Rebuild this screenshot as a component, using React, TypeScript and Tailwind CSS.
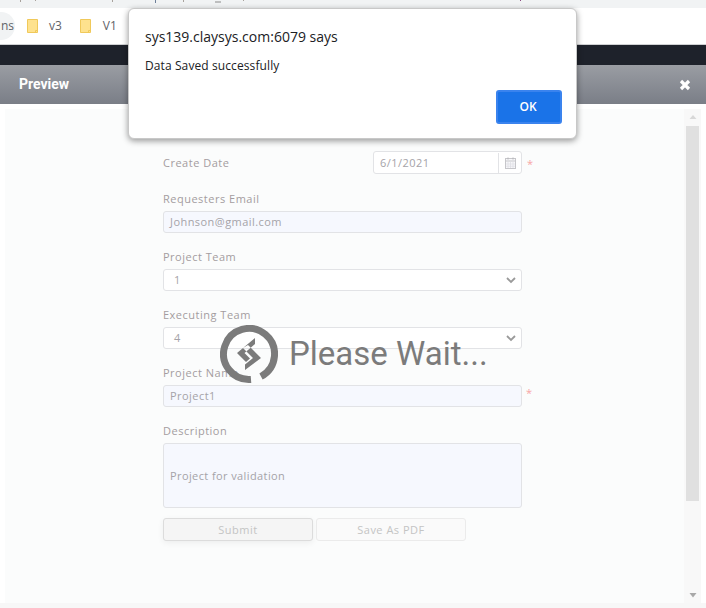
const bodyFont = "font-['Open_Sans','Noto_Sans',sans-serif]";

function Folder() {
  return (
    <svg width="11" height="14" viewBox="0 0 11 14" className="shrink-0">
      <path d="M.5.5h10v13H.5z" fill="#fee28e" stroke="#f0c95a" />
      <path d="M8.500 13.500v-2h2" fill="none" stroke="#f0c95a" />
    </svg>
  );
}

function Label({ children }: { children: React.ReactNode }) {
  return <div className="h-[14px] text-[11px] leading-[14px] tracking-[0.5px] text-[#a49ca0]">{children}</div>;
}

function Field({ label, value, tint, mark }: { label: string; value: string; tint?: boolean; mark?: boolean }) {
  return (
    <div className="flex flex-col gap-[5px]">
      <Label>{label}</Label>
      <div className="relative">
        <div className={`flex h-[22px] w-[359px] items-center rounded-[3px] border border-[#e2e3e6] px-[6px] pt-px text-[11px] tracking-[0.45px] text-[#a5a3a8] ${tint ? "bg-[#f6f8fe]" : "bg-white"}`}>
          {value}
        </div>
        {mark && <span className="absolute left-[363px] top-0 text-[11px] text-[#f7a5a5]">*</span>}
      </div>
    </div>
  );
}

function SelectField({ label, value }: { label: string; value: string }) {
  return (
    <div className="flex flex-col gap-[5px]">
      <Label>{label}</Label>
      <div className="flex h-[22px] w-[359px] items-center justify-between rounded-[3px] border border-[#e2e3e6] bg-white pl-[10px] pr-[3px] pt-px text-[11px] text-[#a5a3a8]">
        {value}
        <svg width="14" height="14" viewBox="0 0 14 14" className="-mt-[2px]">
          <path d="M3 5l4 4 4-4" fill="none" stroke="#9a9a9a" strokeWidth="1.800" />
        </svg>
      </div>
    </div>
  );
}

function CalendarIcon() {
  return (
    <svg width="11" height="12" viewBox="0 0 11 12">
      <rect x=".5" y="1.500" width="10" height="10" fill="#f8f8fa" stroke="#c6c6ca" />
      <path d="M.5 4h10" stroke="#c6c6ca" />
      <path d="M3 5v6M5.500 5v6M8 5v6M1 7h9M1 9.200h9" stroke="#dcdce2" strokeWidth=".7" />
      <path d="M3 .5v2M8 .5v2" stroke="#b5b5b9" />
    </svg>
  );
}

export default function App() {
  return (
    <div className={`relative h-[608px] w-[706px] overflow-hidden bg-white ${bodyFont}`}>
      {/* browser chrome behind the dialog */}
      <div className="h-[8px] bg-[#f1f3f4]">
        {/* bottoms of the address line's letters */}
        <svg width="706" height="3" viewBox="0 0 706 3" className="block">
          <path d="M20.500 0v2M35.500 0v1M112.500 0v2M183.500 0v2M243.500 0v1" stroke="#a8a29c" />
          <path d="M155.500 0v3" stroke="#6d7f99" />
          <path d="M215 2h6" stroke="#8a8a8a" />
          <path d="M520.500 0v1" stroke="#8c4a82" />
        </svg>
      </div>
      <div className="flex h-[37px] items-center border-b border-[#d0d1d3] bg-white text-[12px] text-[#5f6368]">
        <div className="flex h-[28px] w-[15px] items-center justify-end rounded-r-full bg-[#f1f3f4] pr-[1px] text-[12px]">ns</div>
        <div className="ml-[12px] flex items-center gap-[11px]">
          <Folder />
          <span>v3</span>
        </div>
        <div className="ml-[18px] flex items-center gap-[12px]">
          <Folder />
          <span>V1</span>
        </div>
      </div>
      <div className="h-[20px] bg-[#1e222b]" />

      {/* preview modal */}
      <div className="flex h-[39px] items-center justify-between bg-gradient-to-b from-[#9a9da3] to-[#7a7e87] pl-[19px] pr-[15px] font-['Roboto',sans-serif] text-[14px] font-bold text-white">
        <span>Preview</span>
        <svg width="12" height="12" viewBox="0 0 12 12">
          <path d="M2 2l8 8M10 2l-8 8" stroke="#fff" strokeWidth="3.200" />
        </svg>
      </div>
      <div className="flex h-[504px] flex-col">
        <div className="flex h-[499px] px-[5px] pt-[5px]">
          <div className="flex-1 bg-[#fbfcfc] pl-[158px]">
            <div className="flex w-[359px] flex-col gap-[17px] pt-[42px]">
              <div className="mb-px flex h-[23px] items-center justify-between pt-px text-[11px]">
                <div className="tracking-[0.5px] text-[#a49ca0]">Create Date</div>
                <div className="relative -mt-px flex h-[23px] w-[149px] rounded-[3px] border border-[#e2e3e6] bg-white pt-px text-[#a5a3a8]">
                  <div className="flex flex-1 items-center pl-[6px] tracking-[0.45px]">6/1/2021</div>
                  <div className="flex w-[23px] items-center justify-center border-l border-[#e2e3e6]">
                    <CalendarIcon />
                  </div>
                  <span className="absolute left-[153px] top-[4px] text-[#f7a5a5]">*</span>
                </div>
              </div>
              <Field label="Requesters Email" value="Johnson@gmail.com" tint />
              <SelectField label="Project Team" value="1" />
              <SelectField label="Executing Team" value="4" />
              <Field label="Project Name" value="Project1" tint mark />
              <div className="flex flex-col gap-[5px]">
                <Label>Description</Label>
                <div className="flex h-[65px] w-[359px] items-center rounded-[3px] border border-[#e2e3e6] bg-[#f6f8fe] px-[6px] pt-[2px] text-[11px] tracking-[0.4px] text-[#a5a3a8]">
                  Project for validation
                </div>
              </div>
              <div className="-mt-[7px] flex gap-[3px] text-[11px] tracking-[0.5px] text-[#c4c4c4]">
                <button className="h-[23px] w-[150px] rounded-[3px] border border-[#dcdcdc] bg-[#f5f5f5] pt-px shadow-[0_2px_6px_rgba(0,0,0,0.06)]">Submit</button>
                <button className="h-[23px] w-[150px] rounded-[3px] border border-[#ebebeb] bg-[#fafafa] pt-px">Save As PDF</button>
              </div>
            </div>
          </div>
          <div className="flex w-[17px] flex-col items-center bg-[#f8f8f8]">
            <svg width="10" height="17" viewBox="0 0 10 17" className="shrink-0">
              <path d="M1.500 10L5 6l3.500 4z" fill="#d8d8d8" />
            </svg>
            <div className="h-[375px] w-[13px] bg-[#e0e0e0]" />
            <div className="flex-1" />
            <svg width="10" height="12" viewBox="0 0 10 12" className="shrink-0">
              <path d="M1.500 2L5 6.500 8.500 2z" fill="#a8a8a8" />
            </svg>
          </div>
        </div>
        <div className="h-[5px] bg-[#f7f7f7]" />
      </div>

      {/* please wait overlay */}
      <div className="absolute left-[220px] top-[325px] flex items-center gap-[11px]">
        <svg width="58" height="58" viewBox="0 0 58 58">
          <path d="M31 54.400A25.500 25.500 0 1 1 41 51.500" fill="none" stroke="#7b7b7b" strokeWidth="7" />
          <path d="M35 13L17 28l9 9 4-3.500-5.500-5.500L35 19zM28 20l13 13-16 12v-5.500l8-6.500-10-10z" fill="#7b7b7b" />
        </svg>
        <span className="-mt-[2px] font-['Roboto',sans-serif] text-[33px] leading-none text-[#7b7b7b]">Please Wait...</span>
      </div>

      {/* alert dialog */}
      <div className="absolute left-[128px] top-[8px] flex h-[131px] w-[449px] flex-col rounded-[6px] border border-[#c8c8c8] bg-white pl-[16px] pr-[14px] pt-[18px] shadow-[0_2px_6px_rgba(0,0,0,0.4)] font-['Open_Sans',sans-serif]">
        <div className="text-[14px] leading-[20px] text-[#202124]">sys139.claysys.com:6079 says</div>
        <div className="mt-[11px] text-[12px] leading-[16px] tracking-[0.1px] text-[#202124]">Data Saved successfully</div>
        <div className="mt-auto mb-[14px] flex justify-end">
          <button className="h-[34px] w-[66px] rounded-[3px] border-2 border-[#3a83ee] bg-[#1a73e8] pr-[2px] text-[12px] font-semibold text-white">OK</button>
        </div>
      </div>
    </div>
  );
}
